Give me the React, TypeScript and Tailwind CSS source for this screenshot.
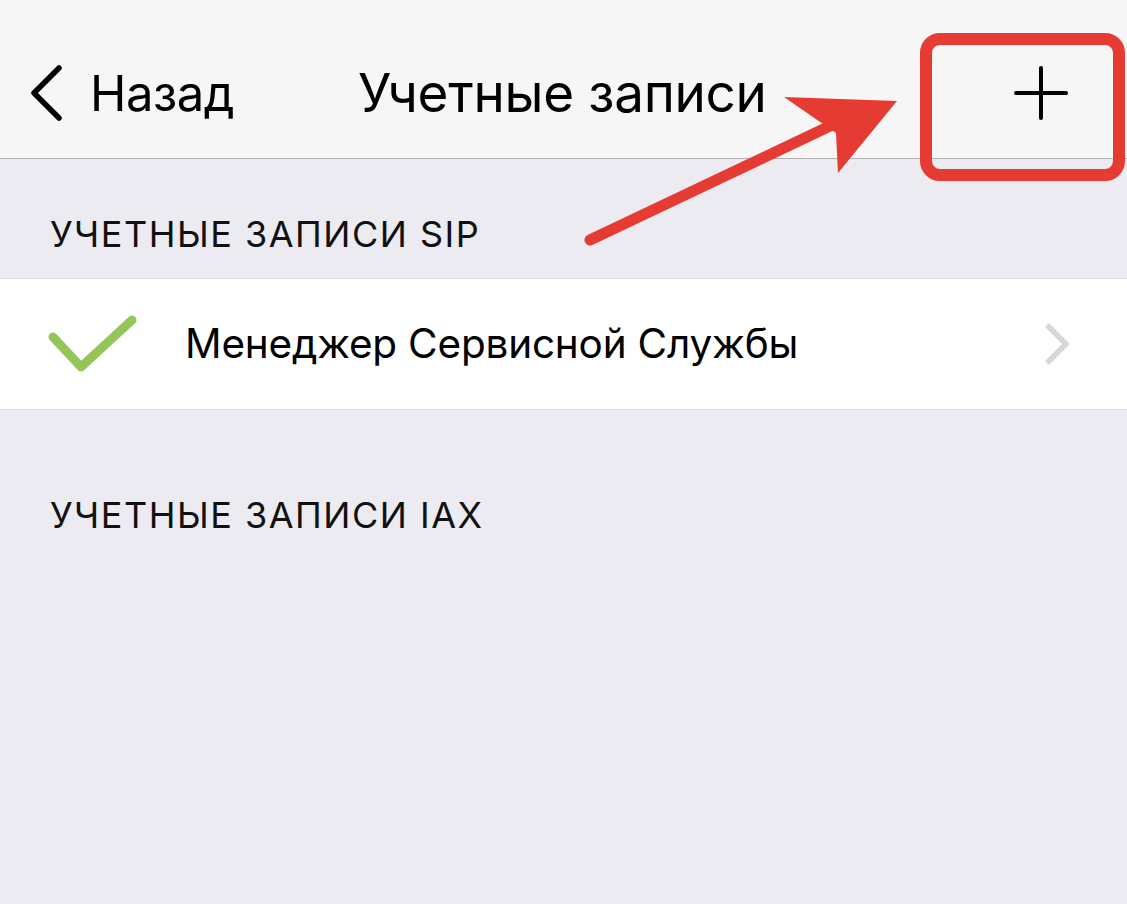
import React from 'react'

const font = { fontFamily: 'Inter, "Noto Sans", sans-serif' }

export default function App() {
  return (
    <div className="relative w-[1127px] h-[904px] overflow-hidden bg-[#ebebf1]" style={font}>
      {/* Nav bar */}
      <div className="h-[159px] bg-[#f6f6f6] border-b border-[#b1b1b5] flex items-center relative">
        <div className="flex items-center pl-[28px] pt-[28px]">
          <svg width="36" height="58" viewBox="0 0 36 58" className="mr-[26px]">
            <path d="M31 4 L6 29 L31 54" fill="none" stroke="#000" strokeWidth="5.5" strokeLinecap="round" strokeLinejoin="round" />
          </svg>
          <span className="text-[49px] leading-none text-black tracking-[-0.5px]">Назад</span>
        </div>
        <div className="absolute left-[358px] top-[67px] text-[53px] leading-none text-black tracking-[-0.3px]">
          Учетные записи
        </div>
        <div className="ml-auto mr-[58px] pt-[28px]">
          <svg width="56" height="56" viewBox="0 0 56 56">
            <path d="M28 3 V53 M3 28 H53" stroke="#000" strokeWidth="4" strokeLinecap="round" />
          </svg>
        </div>
      </div>

      {/* SIP section */}
      <div className="h-[119px] flex items-end pl-[50px] pb-[26px]">
        <span className="text-[36px] leading-none text-[#111] tracking-[1.5px]">УЧЕТНЫЕ ЗАПИСИ SIP</span>
      </div>
      <div className="h-[132px] bg-white border-y border-[#dcdce0] flex items-center">
        <div className="w-[185px] flex pl-[48px]">
          <svg width="90" height="64" viewBox="0 0 90 64">
            <path d="M5 25 L33 55 L84 8" fill="none" stroke="#93c557" strokeWidth="9" strokeLinecap="round" strokeLinejoin="round" />
          </svg>
        </div>
        <span className="text-[40.5px] leading-none text-black tracking-[-0.2px]">Менеджер Сервисной Службы</span>
        <div className="ml-auto mr-[56px]">
          <svg width="28" height="46" viewBox="0 0 28 46">
            <path d="M4 4 L23 23 L4 42" fill="none" stroke="#d7d7d9" strokeWidth="5.5" strokeLinejoin="miter" />
          </svg>
        </div>
      </div>

      {/* IAX section */}
      <div className="h-[123px] flex items-end pl-[50px]">
        <span className="text-[36px] leading-none text-[#111] tracking-[1.5px]">УЧЕТНЫЕ ЗАПИСИ IAX</span>
      </div>

      {/* annotation overlay */}
      <svg className="absolute inset-0 pointer-events-none" width="1127" height="904" viewBox="0 0 1127 904">
        <rect x="926" y="39" width="193" height="136" rx="14" fill="none" stroke="#e53b32" strokeWidth="12" />
        <path d="M590 240 L830 126" stroke="#e53b32" strokeWidth="11" strokeLinecap="round" />
        <path d="M784 97 L897 101 L838 173 L836 133 Z" fill="#e53b32" />
      </svg>
    </div>
  )
}
